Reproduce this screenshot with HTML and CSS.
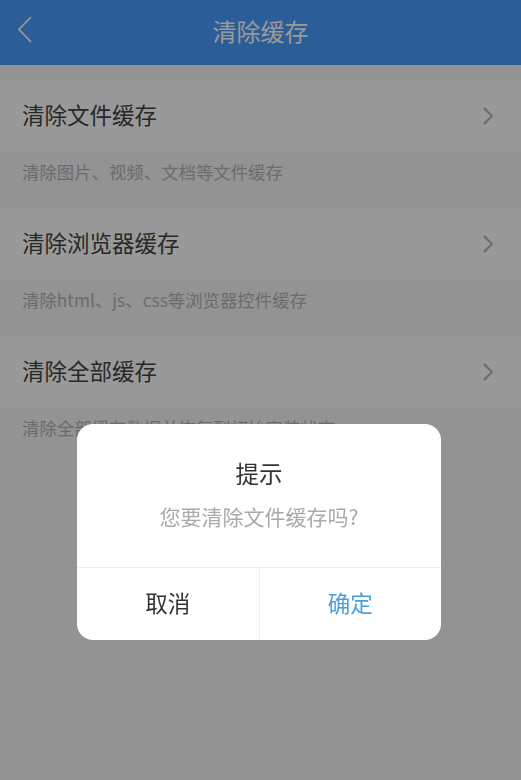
FILE: index.html
```html
<!DOCTYPE html>
<html lang="zh-CN">
<head>
<meta charset="utf-8">
<title>清除缓存</title>
<link rel="stylesheet" href="styles.css">
</head>
<body>
<div class="page">
  <header class="nav">
    <svg class="back" width="16" height="28" viewBox="0 0 16 28"><path d="M14 1 L2 13.5 L14 26" fill="none" stroke="#fff" stroke-width="1.8"/></svg>
    <h1 class="nav-title">清除缓存</h1>
  </header>
  <main class="list">
    <div class="row"><span class="row-label">清除文件缓存</span><svg class="chev" width="12" height="18" viewBox="0 0 12 18"><path d="M2 1 L10 9 L2 17" fill="none" stroke="#b5b5b5" stroke-width="2"/></svg></div>
    <div class="desc">清除图片、视频、文档等文件缓存</div>
    <div class="row"><span class="row-label">清除浏览器缓存</span><svg class="chev" width="12" height="18" viewBox="0 0 12 18"><path d="M2 1 L10 9 L2 17" fill="none" stroke="#b5b5b5" stroke-width="2"/></svg></div>
    <div class="desc">清除html、js、css等浏览器控件缓存</div>
    <div class="row"><span class="row-label">清除全部缓存</span><svg class="chev" width="12" height="18" viewBox="0 0 12 18"><path d="M2 1 L10 9 L2 17" fill="none" stroke="#b5b5b5" stroke-width="2"/></svg></div>
    <div class="desc">清除全部缓存数据并恢复到初始安装状态</div>
  </main>
</div>
<div class="mask">
  <div class="dialog">
    <div class="dialog-body">
      <div class="dialog-title">提示</div>
      <div class="dialog-msg">您要清除文件缓存吗?</div>
    </div>
    <div class="dialog-actions">
      <div class="btn btn-cancel">取消</div>
      <div class="btn btn-ok">确定</div>
    </div>
  </div>
</div>
</body>
</html>
```
FILE: styles.css
```css
* { box-sizing: border-box; }
html, body {
  margin: 0;
  padding: 0;
  width: 521px;
  height: 780px;
  overflow: hidden;
  font-family: "Noto Sans CJK SC", "Noto Sans", sans-serif;
  background: #f5f5f5;
}
.page {
  height: 780px;
  background: #f5f5f5;
}
.nav {
  height: 65px;
  background: #489bfe;
  display: flex;
  align-items: center;
  justify-content: center;
  position: relative;
}
.back {
  position: absolute;
  left: 17px;
  top: 16px;
}
.nav-title {
  margin: 0;
  font-size: 24px;
  font-weight: 400;
  color: #ffffff;
  line-height: 1;
  margin-top: -4px;
}
.list {
  padding-top: 15px;
}
.row {
  height: 72px;
  background: #ffffff;
  display: flex;
  align-items: center;
  justify-content: space-between;
  padding: 0 27px 4px 22px;
}
.chev {
  margin-top: 4px;
}
.row-label {
  font-size: 22.5px;
  color: #444444;
  line-height: 1;
}
.desc {
  height: 56px;
  padding: 11px 0 0 22px;
  font-size: 17.4px;
  color: #b4b4b4;
  background: #f5f5f5;
  line-height: 1;
  white-space: nowrap;
}
.mask {
  position: fixed;
  inset: 0;
  background: rgba(0, 0, 0, 0.4);
  display: flex;
  justify-content: center;
  align-items: flex-start;
  padding-top: 424px;
}
.dialog {
  width: 364px;
  background: #ffffff;
  border-radius: 16px;
  overflow: hidden;
  margin-left: -3px;
}
.dialog-body {
  height: 144px;
  display: flex;
  flex-direction: column;
  align-items: center;
  padding-top: 38px;
  border-bottom: 1px solid #efefef;
}
.dialog-title {
  font-size: 23.5px;
  color: #333333;
  line-height: 1;
}
.dialog-msg {
  margin-top: 20px;
  font-size: 21px;
  color: #aaaaaa;
  line-height: 1;
}
.dialog-actions {
  display: flex;
  height: 72px;
}
.btn {
  flex: 1;
  display: flex;
  align-items: center;
  justify-content: center;
  font-size: 22.5px;
  line-height: 1;
  padding-bottom: 3px;
}
.btn-cancel {
  color: #333333;
  border-right: 1px solid #efefef;
}
.btn-ok {
  color: #4a9fd8;
}
```
